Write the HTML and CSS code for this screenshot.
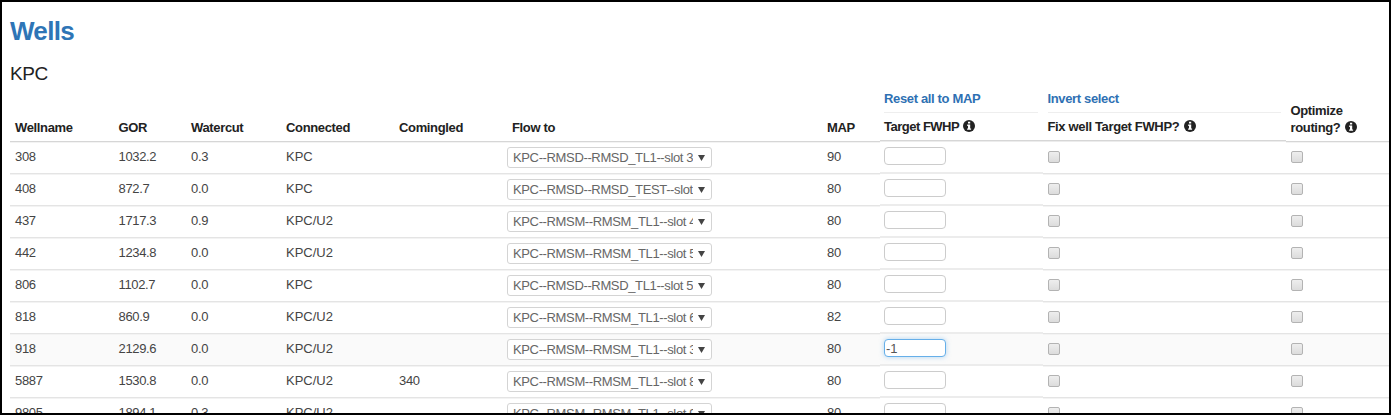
FILE: index.html
```html
<!DOCTYPE html>
<html lang="en">
<head>
<meta charset="utf-8">
<title>Wells</title>
<link rel="stylesheet" href="styles.css">
</head>
<body>
<svg class="defs" width="0" height="0" aria-hidden="true">
  <symbol id="info" viewBox="0 0 12 12"><circle cx="6" cy="6" r="6" fill="#222"/><path d="M5 1.8h2.2v1.8H5zM4.2 4.6h3v3.9h.9v1.3H4.1V8.500h.9V5.900h-.8z" fill="#fff"/></symbol>
</svg>
<main class="page">
  <h1 class="title">Wells</h1>
  <h2 class="group">KPC</h2>
  <div class="table">
    <div class="row head">
      <div class="cell">Wellname</div>
      <div class="cell">GOR</div>
      <div class="cell">Watercut</div>
      <div class="cell">Connected</div>
      <div class="cell">Comingled</div>
      <div class="cell">Flow to</div>
      <div class="cell">MAP</div>
      <div class="cell raised"><a class="action">Reset all to MAP</a><span class="label target">Target FWHP <svg class="info"><use href="#info"/></svg></span></div>
      <div class="cell raised"><a class="action">Invert select</a><span class="label">Fix well Target FWHP? <svg class="info"><use href="#info"/></svg></span></div>
      <div class="cell">Optimize<br>routing? <svg class="info"><use href="#info"/></svg></div>
    </div>
    <div id="rows"></div>
  </div>
</main>
<script src="rows.js"></script>
</body>
</html>
```
FILE: styles.css
```css
* { box-sizing: border-box; }
body {
  margin: 0;
  background: #fff;
  color: #444;
  font: 13px/17px "Liberation Sans", Arial, sans-serif;
}
.defs { display: block; height: 0; }
.page {
  height: 415px;
  overflow: hidden;
  border: 2px solid #000;
  padding: 11px 0 0 8px;
}
.title {
  margin: 0;
  font-size: 26px;
  line-height: 36px;
  letter-spacing: -0.7px;
  color: #2e75b6;
}
.group {
  margin: 10px 0 0;
  font-size: 19px;
  line-height: 30px;
  letter-spacing: -0.4px;
  font-weight: 400;
  color: #222;
}
.row {
  display: grid;
  grid-template-columns: 103.500px 72.500px 95px 113px 113px 315px 57.500px 163.500px 242.500px 1fr;
  height: 32px;
}
.head {
  height: 53px;
  color: #222;
  font-weight: 700;
}
.cell {
  padding: 6px 5px 0;
  white-space: nowrap;
  border-bottom: 1px solid #e4e4e4;
  box-shadow: 0 1px #f3f3f3;
}
.cell.number { letter-spacing: -0.35px; }
.cell.control { padding-top: 5px; }
.cell.raised {
  height: calc(100% - 1px);
  padding-left: 4.500px;
  border-bottom-color: #ececec;
  box-shadow: 0 1px #ececec;
}
.head .cell {
  align-self: end;
  padding-top: 0;
  padding-bottom: 5px;
  border-color: #d6d6d6;
  letter-spacing: -0.35px;
}
.head .cell.raised { height: auto; margin-bottom: 1px; }
.action {
  display: block;
  height: 23px;
  margin-bottom: 5px;
  border-bottom: 1px solid #eee;
  color: #2e70b3;
}
.label { display: block; }
.label.target { letter-spacing: -0.5px; }
.info { width: 12px; height: 12px; margin-left: 1px; vertical-align: -1px; }
.selected { background: #fafafa; }
.select {
  display: flex;
  align-items: center;
  width: 205px;
  height: 21px;
  padding: 0 5px;
  border: 1px solid #d4d4d4;
  border-radius: 3px;
  background: #fff;
  color: #666;
}
.cell.flow { padding-left: 0; }
.option {
  width: 180px;
  overflow: hidden;
  white-space: nowrap;
  letter-spacing: -0.36px;
}
.arrow { width: 7px; height: 6px; margin-left: 5px; }
.input {
  display: block;
  width: 62px;
  height: 18px;
  padding: 0 1px;
  border: 1px solid #ccc;
  border-radius: 4px;
  background: #fff;
  color: #555;
  font: inherit;
}
.input.active { border-color: #66afe9; box-shadow: 0 0 5px #66afe980; }
.box {
  display: block;
  width: 12px;
  height: 12px;
  margin-top: 4px;
  border: 1px solid #b3b3b3;
  border-radius: 2px;
  background: linear-gradient(#eee, #dcdcdc);
}
```
FILE: rows.js
```javascript
const wells = [
  ["308", "1032.2", "0.3", "KPC", "", "KPC--RMSD--RMSD_TL1--slot 3", "90"],
  ["408", "872.7", "0.0", "KPC", "", "KPC--RMSD--RMSD_TEST--slot", "80"],
  ["437", "1717.3", "0.9", "KPC/U2", "", "KPC--RMSM--RMSM_TL1--slot 4", "80"],
  ["442", "1234.8", "0.0", "KPC/U2", "", "KPC--RMSM--RMSM_TL1--slot 5", "80"],
  ["806", "1102.7", "0.0", "KPC", "", "KPC--RMSD--RMSD_TL1--slot 5", "80"],
  ["818", "860.9", "0.0", "KPC/U2", "", "KPC--RMSM--RMSM_TL1--slot 6", "82"],
  ["918", "2129.6", "0.0", "KPC/U2", "", "KPC--RMSM--RMSM_TL1--slot 3", "80", "-1"],
  ["5887", "1530.8", "0.0", "KPC/U2", "340", "KPC--RMSM--RMSM_TL1--slot 8", "80"],
  ["9805", "1894.1", "0.3", "KPC/U2", "", "KPC--RMSM--RMSM_TL1--slot 9", "80"]
];
const cell = (html, extra = "") => `<div class="cell ${extra}">${html}</div>`;
const select = text => `<div class="select"><span class="option">${text}</span><svg class="arrow" viewBox="0 0 7 6"><path d="M0 0h7L3.500 6z" fill="#444"/></svg></div>`;
const box = '<span class="box"></span>';
document.getElementById("rows").innerHTML = wells.map(w =>
  `<div class="row ${w[7] ? "selected" : ""}">` +
  w.slice(0, 5).map((t, i) => cell(t, i === 3 ? "" : "number")).join("") +
  cell(select(w[5]), "control flow") + cell(w[6], "number") +
  cell(`<input class="input ${w[7] ? "active" : ""}" value="${w[7] || ""}">`, "control raised") +
  cell(box, "control") + cell(box, "control") + "</div>"
).join("");
```
